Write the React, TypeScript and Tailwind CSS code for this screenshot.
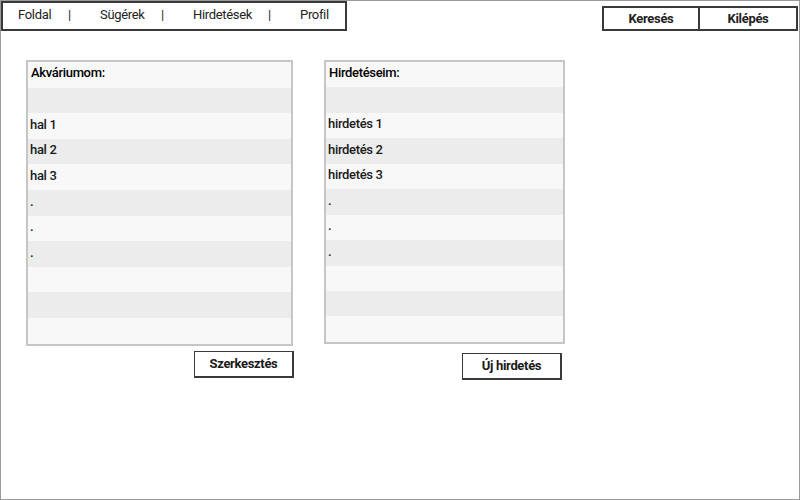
export default function App() {
  const fishes = ["", "hal 1", "hal 2", "hal 3", ".", ".", ".", "", "", ""];
  const ads = ["", "hirdetés 1", "hirdetés 2", "hirdetés 3", ".", ".", ".", "", "", ""];

  const Panel = ({ title, rows, w, rh }: { title: string; rows: string[]; w: string; rh: string }) => (
    <div className={`${w} border-2 border-[#c6c6c6] bg-[#f8f8f8]`}>
      <div className={`${rh} flex items-center pb-[4px] px-[3px] text-[13px] font-medium tracking-tight text-black`}>{title}</div>
      {rows.map((r, i) => (
        <div
          key={i}
          className={`${rh} flex items-center pb-[3px] px-[2px] text-[13px] font-medium tracking-tight text-[#1a1a1a] ${i % 2 === 0 ? "bg-[#ececec]" : "bg-[#f8f8f8]"}`}
        >
          {r}
        </div>
      ))}
    </div>
  );

  const btn =
    "w-[100px] h-[27px] border border-[#3a3a3a] border-r-2 border-b-2 flex items-center justify-center text-[13px] font-bold tracking-tight text-[#1a1a1a] bg-white";

  return (
    <div
      className="w-[800px] h-[500px] bg-white border border-[#9a9a9a]"
      style={{ fontFamily: 'Roboto, "Liberation Sans", sans-serif' }}
    >
      <div className="flex justify-between">
        <div className="w-[346px] h-[30px] border-2 border-[#3a3a3a] flex items-center pl-[15px] pb-[2px] text-[13px] tracking-tight text-[#222]">
          <span className="w-[50px]">Foldal</span>
          <span className="w-[32px]">|</span>
          <span className="w-[61px]">Sügérek</span>
          <span className="w-[32px]">|</span>
          <span className="w-[75px]">Hirdetések</span>
          <span className="w-[32px]">|</span>
          <span>Profil</span>
        </div>
        <div className="flex mt-[5px] mr-[1px]">
          <div className="w-[98px] h-[25px] border-2 border-[#3a3a3a] flex items-center justify-center text-[13px] font-bold tracking-tight text-[#222]">
            Keresés
          </div>
          <div className="w-[98px] h-[25px] border-2 border-l-0 border-[#3a3a3a] flex items-center justify-center text-[13px] font-bold tracking-tight text-[#222]">
            Kilépés
          </div>
        </div>
      </div>

      <div className="flex gap-[31px] ml-[25px] mt-[29px]">
        <div className="flex flex-col items-end">
          <Panel title="Akváriumom:" rows={fishes} w="w-[267px]" rh="h-[25.6px]" />
          <div className={`mt-[5px] mr-[-1px] ${btn}`}>Szerkesztés</div>
        </div>
        <div className="flex flex-col items-end">
          <Panel title="Hirdetéseim:" rows={ads} w="w-[241px]" rh="h-[25.45px]" />
          <div className={`mt-[9px] mr-[3px] ${btn}`}>Új hirdetés</div>
        </div>
      </div>
    </div>
  );
}
